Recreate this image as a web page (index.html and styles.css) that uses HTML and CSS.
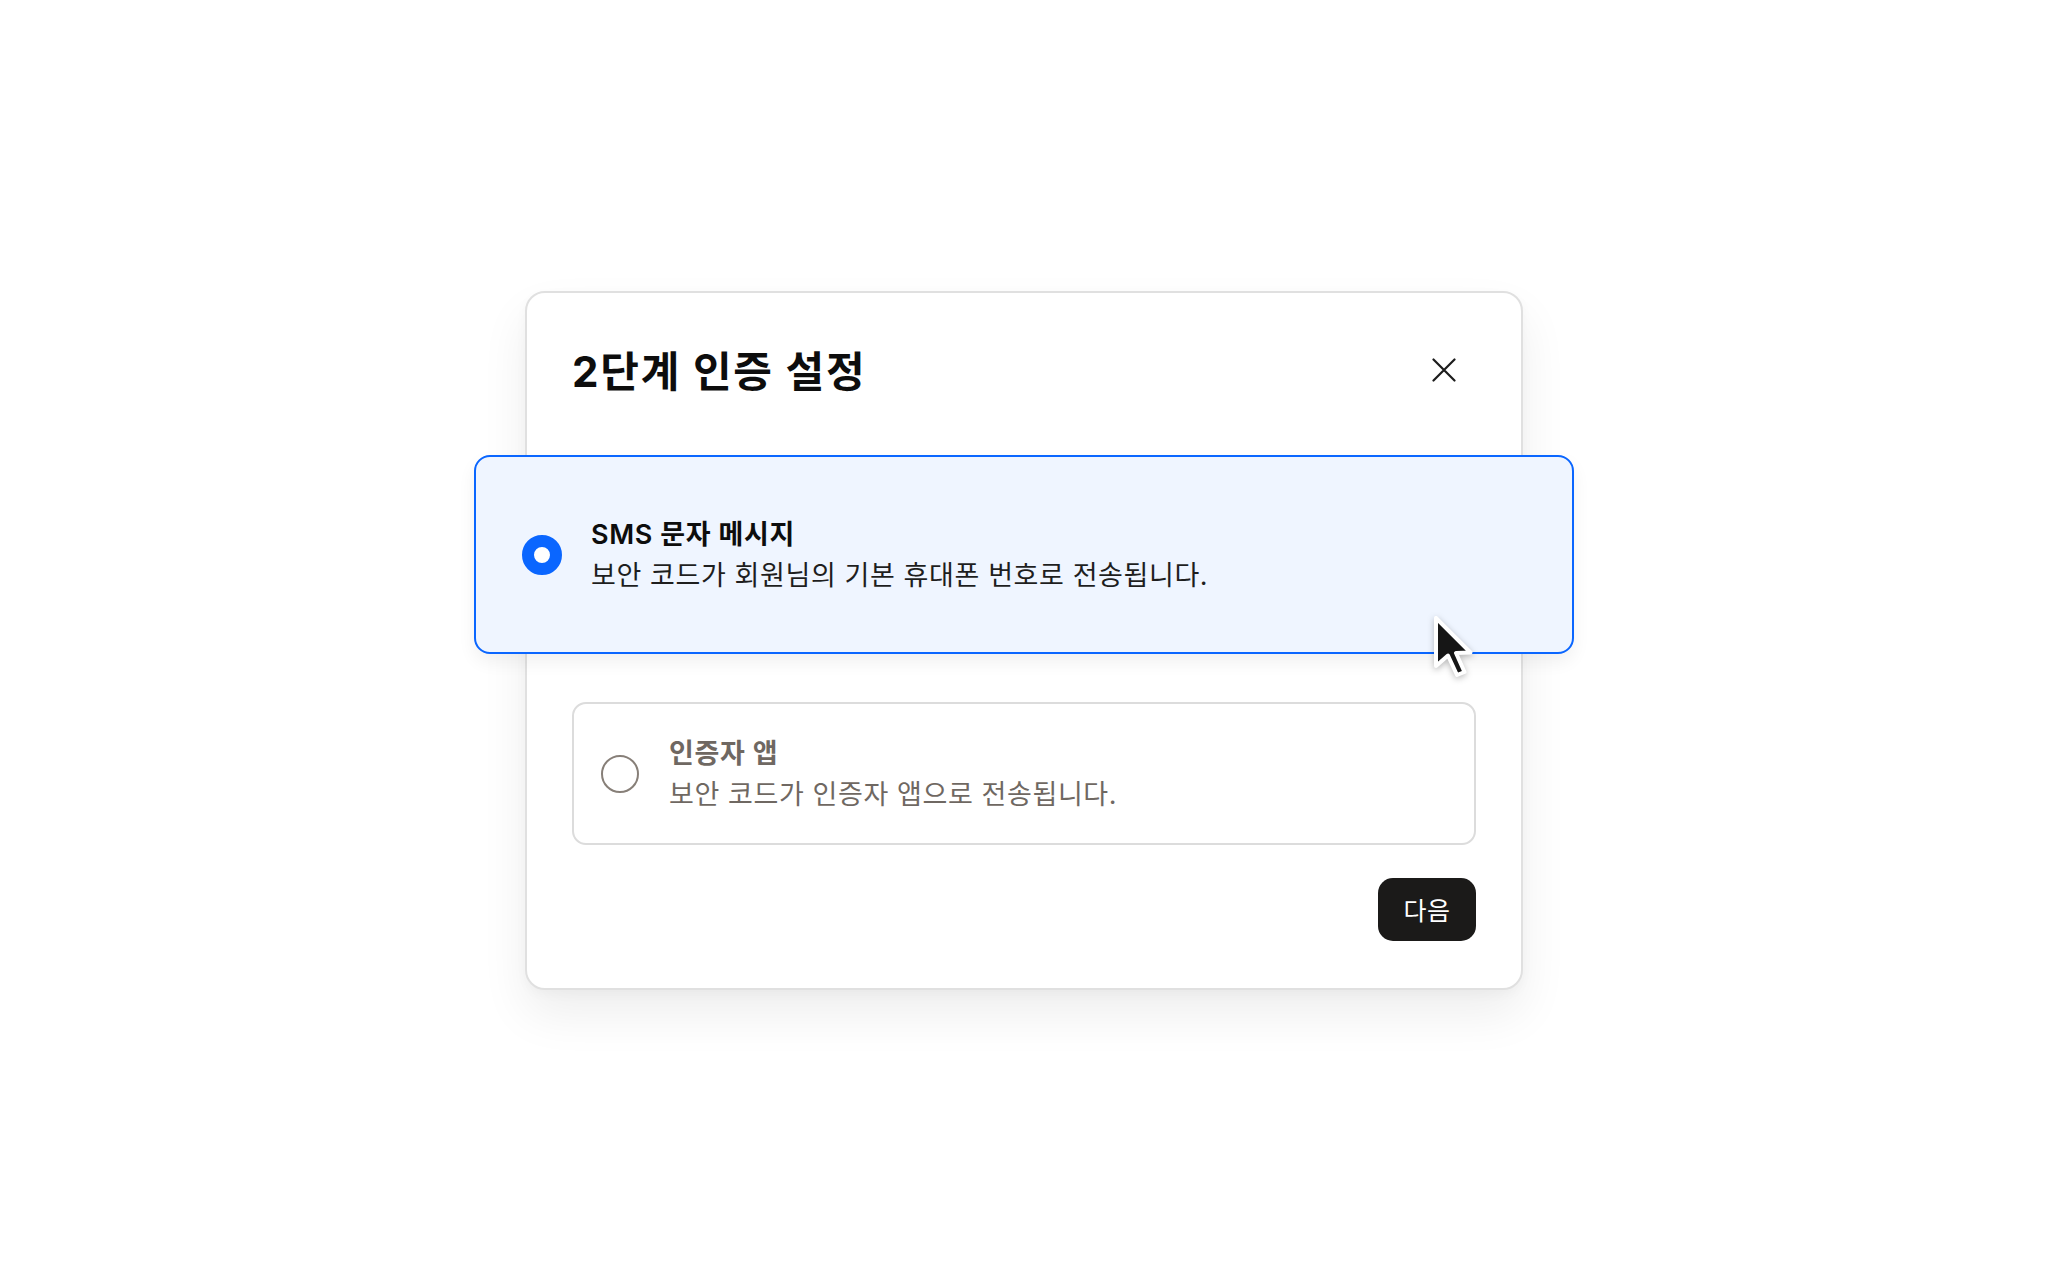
FILE: index.html
```html
<!DOCTYPE html>
<html lang="ko">
<head>
  <meta charset="UTF-8" />
  <meta name="viewport" content="width=device-width, initial-scale=1.0"/>
  <title>2단계 인증 설정</title>
  <link rel="stylesheet" href="styles.css">
</head>
<body>
  <div class="page">
    <div class="dialog" role="dialog" aria-labelledby="dialogTitle">
      <header class="dialog-header">
        <h1 id="dialogTitle">2단계 인증 설정</h1>
        <button class="close-btn" aria-label="닫기">
          <svg width="24" height="24" viewBox="0 0 24 24" fill="none" stroke="#1c1c1c" stroke-width="2.2" stroke-linecap="round">
            <path d="M1.5 1.5 L22.5 22.5 M22.5 1.5 L1.5 22.5"/>
          </svg>
        </button>
      </header>

      <div class="options">
        <!-- Selected method -->
        <label class="option option-active">
          <input type="radio" name="method" value="sms" checked>
          <span class="option-text">
            <span class="option-title">SMS 문자 메시지</span>
            <span class="option-desc">보안 코드가 회원님의 기본 휴대폰 번호로 전송됩니다.</span>
          </span>
          <!-- mouse pointer hovering the card -->
          <svg class="pointer" width="44" height="66" viewBox="0 0 44 66">
            <path d="M3 3 L3 51 L15 40.5 L24 60 L31.5 57 L23 38 L37.5 37.5 Z"
                  fill="#161616" stroke="#fff" stroke-width="4" stroke-linejoin="round"/>
          </svg>
        </label>

        <label class="option">
          <input type="radio" name="method" value="app">
          <span class="option-text">
            <span class="option-title">인증자 앱</span>
            <span class="option-desc">보안 코드가 인증자 앱으로 전송됩니다.</span>
          </span>
        </label>
      </div>

      <div class="dialog-actions">
        <button class="next-btn">다음</button>
      </div>
    </div>
  </div>
</body>
</html>
```

FILE: styles.css
```css
/* Reset */
* {
  margin: 0;
  padding: 0;
  box-sizing: border-box;
}

body {
  font-family: 'Inter', 'Noto Sans CJK KR', sans-serif;
  color: #111;
  background-color: #fff;
}

.page {
  height: 100vh;
  display: flex;
  align-items: center;
  justify-content: center;
}

/* Dialog */
.dialog {
  width: 998px;
  padding: 55px 45px 47px;
  background-color: #fff;
  border: 2px solid #e0e0e0;
  border-radius: 20px;
  box-shadow: 0 24px 48px rgba(0, 0, 0, 0.07), 0 4px 12px rgba(0, 0, 0, 0.03);
}

.dialog-header {
  display: flex;
  align-items: center;
  justify-content: space-between;
  height: 48px;
  padding-right: 20px;
}

.dialog-header h1 {
  font-size: 42px;
  line-height: 48px;
  font-weight: 700;
  letter-spacing: 1.8px;
  color: #0d0d0d;
}

.close-btn {
  display: flex;
  background: none;
  border: none;
  cursor: pointer;
  margin-top: -4px;
}

/* Method options */
.options {
  display: flex;
  flex-direction: column;
  gap: 48px;
  margin-top: 59px;
}

.option {
  position: relative;
  display: flex;
  align-items: center;
  gap: 30px;
  padding: 29px 27px 28px;
  border: 2px solid #dcdcdc;
  border-radius: 14px;
  background-color: #fff;
  color: #6f6862;
  cursor: pointer;
}

.option input {
  appearance: none;
  flex: none;
  width: 38px;
  height: 38px;
  border: 2px solid #877f78;
  border-radius: 50%;
  background-color: #fff;
  cursor: pointer;
}

.option-active {
  margin: 0 -98px;
  padding: 57px 46px 56px;
  border-color: #0a66ff;
  border-radius: 16px;
  background-color: #eff5ff;
  color: #111;
  gap: 29px;
  box-shadow: 0 8px 18px rgba(0, 0, 0, 0.06);
}

.option-active input {
  width: 40px;
  height: 40px;
  border: 12px solid #0a66ff;
}

.option-text {
  display: flex;
  flex-direction: column;
  font-size: 27px;
  line-height: 41px;
  letter-spacing: 0.6px;
}

.option-title {
  font-weight: 600;
}

.option-active .option-title {
  color: #0d0d0d;
}

.option-active .option-desc {
  color: #1e1e1e;
}

.pointer {
  position: absolute;
  left: 957px;
  top: 158px;
  filter: drop-shadow(0 2px 3px rgba(0, 0, 0, 0.25));
}

/* Footer button */
.dialog-actions {
  display: flex;
  justify-content: flex-end;
  margin-top: 33px;
}

.next-btn {
  width: 98px;
  height: 63px;
  background-color: #1b1a19;
  color: #fff;
  border: none;
  border-radius: 15px;
  font-family: inherit;
  font-size: 25px;
  letter-spacing: 0.6px;
  cursor: pointer;
}
```
